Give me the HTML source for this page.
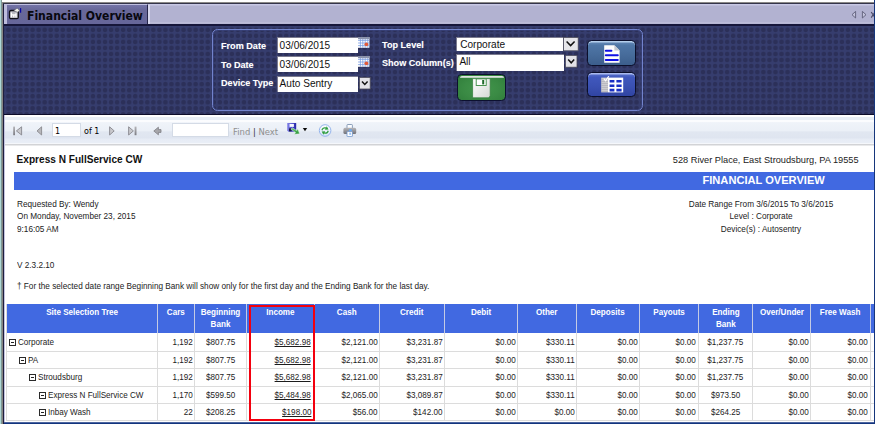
<!DOCTYPE html><html><head><meta charset="utf-8"><title>Financial Overview</title><style>
*{box-sizing:border-box}
html,body{margin:0;padding:0}
body{width:875px;height:424px;overflow:hidden;background:#fff;position:relative;font-family:"Liberation Sans",Arial,sans-serif;font-size:8px;color:#222}
.abs{position:absolute}
#frame-l1{left:0;top:0;width:1px;height:424px;background:#aed8d6}
#frame-l2{left:1px;top:0;width:1px;height:424px;background:#7f9896}
#frame-l3{left:2px;top:2px;width:1px;height:422px;background:#868482}
#frame-l4{left:3px;top:3px;width:1px;height:421px;background:#1e1e3e}
#frame-l5{left:4px;top:115px;width:1px;height:308px;background:#c4c4e0}
#frame-t{left:2px;top:2px;width:873px;height:1px;background:#8a8886}
#frame-t2{left:3px;top:3px;width:872px;height:1px;background:#34344a}
#frame-r{left:874px;top:0;width:1px;height:424px;background:#16367c}
#frame-b{left:4px;top:423px;width:871px;height:1px;background:#12347e}
#frame-b2{left:4px;top:422px;width:871px;height:1px;background:#4d66a0}
#tabbar{left:4px;top:4px;width:870px;height:20.6px;background:linear-gradient(#c8c8e4 0,#c8c8e4 1px,#b2b2d1 2px,#b2b2d1 18px,#c4c4de 19px,#9a9abf 20.6px)}
#tabhl{left:148px;top:5px;width:1.6px;height:19px;background:#d6d6ec}
#tab{left:4px;top:4px;width:144px;height:20.6px;background:linear-gradient(#7474a8 0,#686899 5px,#66669a 100%);border-left:3px solid #bcbcdc;border-top:1px solid #c0c0e0;border-right:1.5px solid #26264a}
#tabtxt{left:27.4px;top:6.6px;font-family:"DejaVu Sans",Verdana,sans-serif;font-weight:bold;font-size:12.6px;line-height:18px;color:#08080f;white-space:nowrap;transform-origin:0 50%;transform:scaleX(0.86)}
#tabline{left:4px;top:24.4px;width:870px;height:1.4px;background:#16163a}
#panel{left:4px;top:25.6px;width:870px;height:88.8px;background-color:#363d6e;overflow:hidden}
#panelline{left:4px;top:113.8px;width:870px;height:1.4px;background:#0c0c2a}
#fbox{left:211.8px;top:29.3px;width:431px;height:81.4px;border:1.8px solid #7283cc;border-radius:5.5px;box-shadow:inset 0 0 0 1px rgba(60,70,130,.6)}
.lbl{color:#fff;font-weight:bold;font-size:9.6px;line-height:12px;white-space:nowrap;transform-origin:0 50%;transform:scaleX(.948);text-shadow:0 0 1px rgba(255,255,255,.3)}
.inp{background:#fff;border-top:1px solid #7b7b8f;border-left:1px solid #7b7b8f;font-size:10.1px;line-height:14px;color:#111;padding-left:2px;white-space:nowrap;overflow:hidden}
.ddbtn{background:linear-gradient(#f4f4f4,#d4d4dc);border:1px solid #555;}
#tb{left:5px;top:115px;width:869px;height:31px;background:linear-gradient(#fff 0,#fff 2px,#e8eef6 2.4px,#e8eef6 4.6px,#fbfcfe 5.2px,#fbfcfe 6.6px,#eff3f9 7.6px,#ebf0f7 15.6px,#e1e7f1 17px,#dfe5f0 22.6px,#e7ecf5 24.6px,#e9eef6 27.6px,#f5f7fb 28.2px,#f5f7fb 29.2px,#d2d3d6 29.5px,#d2d3d6 30.4px,#fff 30.6px,#fff 31px)}
.tbt{font-family:"DejaVu Sans",Verdana,sans-serif;font-size:8px;line-height:12px;white-space:nowrap}
.tbin{background:#fff;border:1px solid #d4dbe6}
#bluebar{left:14px;top:172px;width:861px;height:17.7px;background:#4169e1}
.t8{font-size:8.7px;line-height:12px;white-space:nowrap;color:#222;transform:scaleX(.945);transform-origin:0 50%}
.t8.ctr{transform-origin:50% 50%}
.hd{background:#4169e1;color:#fff;font-weight:bold;font-size:8.8px;line-height:12px;text-align:center;padding-top:2.4px;border-right:1px solid #c4cbe4}
.hd span{display:inline-block;transform:scaleX(.92);transform-origin:50% 50%;white-space:nowrap}
.tx{display:inline-block;transform:scaleX(.933);transform-origin:100% 50%}
.cell.c .tx{transform-origin:50% 50%}
.cell.l .tx{transform-origin:0 50%}
.cell{font-size:8.7px;line-height:12px;white-space:nowrap;color:#1c1c1c;border-right:1px solid #dcdcdc;border-bottom:1px solid #dcdcdc;text-align:right;padding:3.2px 1.6px 0 0}
.cell.c{text-align:center;padding-right:0}
.cell.l{text-align:left;padding-right:0}
.cell u{text-decoration:underline}
.bx{display:inline-block;width:7px;height:7px;border:1px solid #2a2a2a;position:relative;vertical-align:-1px;margin-right:1.8px;background:#fff}
.bx:after{content:"";position:absolute;left:1px;top:2px;width:3px;height:1px;background:#222}
</style></head><body>
<div class="abs" id="tabbar"></div><div class="abs" id="tab"></div><div class="abs" id="tabhl"></div>
<div class="abs" id="tabtxt">Financial Overview</div>
<div class="abs" id="panel"><svg width="870" height="90" style="position:absolute;left:0;top:0"><defs><pattern id="dots" x="1.38" y="0.78" width="6.04" height="6.04" patternUnits="userSpaceOnUse"><circle cx="3.02" cy="3.02" r="2.3" fill="#2c3059"/></pattern></defs><rect width="870" height="90" fill="url(#dots)"/></svg></div><div class="abs" id="tabline"></div><div class="abs" id="panelline"></div>
<svg class="abs" style="left:8px;top:7px" width="15" height="14" viewBox="0 0 15 14"><rect x="1.5" y="3.500" width="8.800" height="8.200" rx="1.500" fill="#b9b9c0" stroke="#101018" stroke-width="1.300"/><path d="M3.400 5.400v4.800M3.400 7.800h4.600M5.800 7.800v2.400M8 6.200v4" stroke="#fff" stroke-width="1.300" fill="none"/><path d="M5.800 3.600 9.200 1.200 11.600 3.400 9.400 5.200z" fill="#f6f6ee" stroke="#55555f" stroke-width=".5"/><rect x="12" y="1.100" width="1.200" height="4.600" fill="#0808a4"/></svg>
<svg class="abs" style="left:848px;top:9px" width="27" height="12" viewBox="0 0 27 12"><path d="M7.6 2.4 4 5.7 7.6 9z" fill="#c4c4dc" stroke="#5c5c78" stroke-width=".9"/><path d="M14.4 2.4 18 5.7 14.4 9z" fill="#c4c4dc" stroke="#5c5c78" stroke-width=".9"/><path d="M23.2 3 27 8.6M27 3 23.2 8.6" stroke="#4a4a66" stroke-width="1.1" fill="none"/></svg>

<div class="abs" id="fbox"></div>
<div class="abs lbl" style="left:220.6px;top:39.7px">From Date</div>
<div class="abs lbl" style="left:220.6px;top:58.7px">To Date</div>
<div class="abs lbl" style="left:220.6px;top:76.8px">Device Type</div>
<div class="abs lbl" style="left:381.5px;top:39px">Top Level</div>
<div class="abs lbl" style="left:381.5px;top:57px">Show Column(s)</div>
<div class="abs inp" style="left:276.6px;top:37.2px;width:81px;height:15.8px;line-height:15px">03/06/2015</div>
<div class="abs inp" style="left:276.6px;top:56.2px;width:81px;height:16.2px;line-height:15px">03/06/2015</div>
<div class="abs inp" style="left:276.6px;top:76px;width:81px;height:15.8px">Auto Sentry</div>
<div class="abs inp" style="left:456.2px;top:37.2px;width:107px;height:14px;line-height:13px;padding-left:3px">Corporate</div>
<div class="abs inp" style="left:456.4px;top:54.4px;width:108px;height:16.4px;line-height:14.6px">All</div>
<svg class="abs" style="left:358.4px;top:37px" width="12" height="11" viewBox="0 0 12 11"><rect x="0" y="0" width="11.4" height="10.8" fill="#fff"/><rect x="0" y="0" width="11.4" height="2.2" fill="#8c93ab"/><path d="M0 3.4h11.4M0 6h11.4M0 8.6h11.4M2.4 1.8v9M4.8 1.8v9M7.2 1.8v9M9.8 1.8v9" stroke="#6f93e0" stroke-width=".7"/><circle cx="8.4" cy="7.3" r="1.9" fill="#e25a3a"/></svg>
<svg class="abs" style="left:358.4px;top:55.6px" width="12" height="11" viewBox="0 0 12 11"><rect x="0" y="0" width="11.4" height="10.8" fill="#fff"/><rect x="0" y="0" width="11.4" height="2.2" fill="#8c93ab"/><path d="M0 3.4h11.4M0 6h11.4M0 8.6h11.4M2.4 1.8v9M4.8 1.8v9M7.2 1.8v9M9.8 1.8v9" stroke="#6f93e0" stroke-width=".7"/><circle cx="8.4" cy="7.3" r="1.9" fill="#e25a3a"/></svg>
<svg class="abs" style="left:358.8px;top:76.8px" width="12" height="13" viewBox="0 0 12 13"><rect x=".4" y=".4" width="10.8" height="11.6" fill="#e3e3e8" stroke="#4a4a5a" stroke-width=".8"/><path d="M3 4.4 5.8 7.4 8.6 4.4" stroke="#111" stroke-width="1.5" fill="none"/></svg>
<svg class="abs" style="left:562.6px;top:37.3px" width="16" height="15" viewBox="0 0 16 15"><rect x=".4" y=".4" width="14.8" height="13.4" fill="#e6e6ea" stroke="#4a4a5a" stroke-width=".8"/><path d="M3.6 4.4 7.6 8.6 11.6 4.4" stroke="#111" stroke-width="1.5" fill="none"/></svg>
<svg class="abs" style="left:564.6px;top:54.8px" width="13" height="13" viewBox="0 0 13 13"><rect x=".4" y=".4" width="11.6" height="11.8" fill="#e3e3e8" stroke="#4a4a5a" stroke-width=".8"/><path d="M3.2 4.6 6.2 7.8 9.2 4.6" stroke="#111" stroke-width="1.5" fill="none"/></svg>
<div class="abs" style="left:457.2px;top:74.4px;width:48.6px;height:26.4px;border-radius:4.5px;background:radial-gradient(ellipse at 50% 55%,#43964c 0,#3a8a44 55%,#2f7c3a 100%);border:1.3px solid #0c1030"></div><div class="abs" style="left:460px;top:75.6px;width:44px;height:2.2px;border-radius:2px 2px 0 0;background:linear-gradient(#eef2ee,#a9c3ad)"></div>
<svg class="abs" style="left:471.8px;top:77.6px" width="20" height="21" viewBox="0 0 20 21"><defs><linearGradient id="flp" x1="0" y1="0" x2="1" y2="1"><stop offset="0" stop-color="#ffffff"/><stop offset="1" stop-color="#d4d8d4"/></linearGradient></defs><path d="M.6 .6h17.6v17.4l-1.6 1.8H.6z" fill="url(#flp)" stroke="#2f7a38" stroke-width=".7"/><rect x="4.2" y=".9" width="10" height="6.6" fill="#fff" stroke="#3a8a42" stroke-width=".9"/><rect x="10.2" y="2" width="2" height="4.4" fill="#1f6a2a"/></svg>
<div class="abs" style="left:587px;top:40px;width:49.2px;height:26.2px;border-radius:4.5px;background:linear-gradient(#6a8fbc 0,#4f76a6 18%,#466b9a 60%,#3c5e8c 100%);border:1.3px solid #0b0f2c;box-shadow:inset 0 1.6px 0 rgba(200,222,248,.8)"></div>
<svg class="abs" style="left:604px;top:45px" width="16" height="18" viewBox="0 0 16 18"><path d="M.2 .2h10.2l5.200 5.200v12.400H.2z" fill="#fcfcfc"/><path d="M10.400 .2v5.200h5.200z" fill="#c4c8d2"/><path d="M1.800 5.800h5.600M1.800 10.200h12M1.800 14.900h12" stroke="#1010e4" stroke-width="2" stroke-linecap="round" fill="none"/></svg>
<div class="abs" style="left:587px;top:71.8px;width:49.2px;height:25px;border-radius:4.5px;background:linear-gradient(#5f78d0 0,#4058bd 18%,#3a50b2 60%,#3044a2 100%);border:1.3px solid #0b0f2c;box-shadow:inset 0 1.6px 0 rgba(196,210,250,.75)"></div>
<svg class="abs" style="left:601px;top:75.600px" width="23" height="17" viewBox="0 0 23 17"><rect x=".2" y="1.600" width="6.800" height="14.800" fill="#d0d0d4"/><path d="M.2 3.400h6.800M.2 5.400h6.800M.2 7.400h6.800M.2 9.400h6.800M.2 11.400h6.800M.2 13.400h6.800M.2 15.400h6.800" stroke="#a4a4ac" stroke-width=".6"/><rect x="7" y="1.600" width="15.200" height="14.800" fill="#fff"/><path d="M8.600 5.200h4.800M15.400 5.200h5.200M8.600 9.800h4.800M15.400 9.800h5.200M8.600 14.100h4.800M15.400 14.100h5.200" stroke="#1a2fc4" stroke-width="2.600"/><path d="M2.800 2.600 4.600 4.800 7.800 .2" stroke="#fff" stroke-width="1.200" fill="none"/></svg>
<div class="abs" style="left:429px;top:115.4px;width:27px;height:4.5px;background:linear-gradient(#3f74e6,#6c9cf0)"></div>
<svg class="abs" style="left:439.6px;top:115.6px" width="6" height="5" viewBox="0 0 6 5"><path d="M3 .4 5.8 4.2H.2z" fill="#fff"/></svg>

<div class="abs" id="tb"></div>
<div class="abs tbin" style="left:51.5px;top:123px;width:29px;height:14px"></div>
<div class="abs tbt" style="left:55px;top:125.6px;color:#000">1</div>
<div class="abs tbt" style="left:84px;top:125.6px;color:#000">of 1</div>
<div class="abs tbin" style="left:172px;top:123px;width:57px;height:14px"></div>
<div class="abs tbt" style="left:233px;top:125.6px;color:#8f8f8f;font-size:8.45px">Find <span style="color:#333">|</span> Next</div>
<svg class="abs" style="left:12px;top:124.800px" width="152" height="13" viewBox="0 0 152 13"><defs><linearGradient id="gry" x1="0" y1="0" x2="0" y2="1"><stop offset="0" stop-color="#b4b4b8"/><stop offset="1" stop-color="#7c7c82"/></linearGradient></defs>
<rect x="1.2" y="1.6" width="1.8" height="8.6" fill="url(#gry)"/><path d="M9.6 1.8 4.4 5.9 9.6 10z" fill="#c8c8cc" stroke="#88888e" stroke-width=".9"/>
<path d="M29.6 1.8 25 5.9 29.6 10z" fill="#b8b8bc" stroke="#8a8a90" stroke-width=".9"/>
<path d="M97.6 1.8 102.2 5.9 97.6 10z" fill="#c8c8cc" stroke="#88888e" stroke-width=".9"/>
<path d="M116.6 1.8 121.4 5.9 116.6 10z" fill="#c8c8cc" stroke="#88888e" stroke-width=".9"/><rect x="122.6" y="1.6" width="1.9" height="8.6" fill="url(#gry)"/>
<path d="M141.8 6 146.4 2.2v2.4h2.6v2.8h-2.6v2.4z" fill="#a6a6aa" stroke="#7e7e84" stroke-width=".8"/></svg>
<svg class="abs" style="left:286px;top:122px" width="24" height="14" viewBox="0 0 24 14"><defs><linearGradient id="flb" x1="0" y1="0" x2="1" y2="0"><stop offset="0" stop-color="#8686e6"/><stop offset=".55" stop-color="#4a4ad0"/><stop offset="1" stop-color="#2626a4"/></linearGradient><linearGradient id="arg" x1="0" y1="0" x2="0" y2="1"><stop offset="0" stop-color="#6ccc78"/><stop offset="1" stop-color="#23902f"/></linearGradient></defs><path d="M1.200 1h9v8.700H2.400L1.200 8.500z" fill="url(#flb)"/><rect x="3.500" y="1.900" width="4.400" height="3" fill="#f4f6ff"/><rect x="3" y="6.400" width="2.600" height="3" fill="#1a1a44"/><path d="M5 7.200 6.200 5.800 10.600 8.400 11.800 6.800 13.600 11.800 8.400 12.200 9.600 10.500z" fill="url(#arg)" stroke="#e8f4ec" stroke-width=".5"/><path d="M16.800 6h4.400L19 9.200z" fill="#0a0a0a"/></svg>
<svg class="abs" style="left:318px;top:123px" width="15" height="15" viewBox="0 0 15 15"><defs><linearGradient id="rfg" x1="0" y1="0" x2="0" y2="1"><stop offset="0" stop-color="#ffffff"/><stop offset="1" stop-color="#d4e2f8"/></linearGradient></defs><circle cx="7.100" cy="7.500" r="5.800" fill="url(#rfg)" stroke="#94b4ec" stroke-width="1"/><path d="M3.400 7C3.800 4.600 6.200 3.600 8.200 4.400l.6-1.200 1.700 3.200-3.500.4.600-1.200C6.400 5.200 4.800 5.800 4.600 7.400z" fill="#2f9e3e"/><path d="M10.800 8C10.400 10.400 8 11.400 6 10.600l-.6 1.200-1.700-3.200 3.500-.4-.6 1.200c1.200.4 2.800-.2 3-1.800z" fill="#2f9e3e"/></svg>
<svg class="abs" style="left:343px;top:124px" width="14" height="13" viewBox="0 0 14 13"><defs><linearGradient id="prg" x1="0" y1="0" x2="0" y2="1"><stop offset="0" stop-color="#b6b6ba"/><stop offset="1" stop-color="#707076"/></linearGradient></defs><rect x="4" y=".5" width="5.400" height="4.400" rx=".8" fill="#fafcff" stroke="#7088a8" stroke-width=".8"/><rect x=".4" y="3.800" width="12.800" height="6.300" rx="1.600" fill="url(#prg)"/><rect x="4" y="7.400" width="5.400" height="5.200" rx=".6" fill="#fcfdff" stroke="#6f94cc" stroke-width=".8"/><rect x="6" y="5.300" width="2.800" height="1.700" fill="#6cacf0"/><rect x="6.300" y="8.600" width="1.600" height="2.200" fill="#8cbcf4"/></svg>

<div class="abs" style="left:16.6px;top:153px;font-weight:bold;font-size:10.1px;line-height:14px;white-space:nowrap;color:#111">Express N FullService CW</div>
<div class="abs" style="right:16.7px;top:153.2px;font-size:9.8px;line-height:14px;white-space:nowrap;color:#222;transform:scaleX(.94);transform-origin:100% 50%">528 River Place, East Stroudsburg, PA 19555</div>
<div class="abs" id="bluebar"></div>
<div class="abs" style="left:702.5px;top:173px;font-weight:bold;font-size:11.1px;line-height:15px;white-space:nowrap;color:#fff">FINANCIAL OVERVIEW</div>
<div class="abs t8" style="left:16.6px;top:197.8px">Requested By: Wendy</div>
<div class="abs t8" style="left:16.6px;top:210.2px">On Monday, November 23, 2015</div>
<div class="abs t8" style="left:16.6px;top:222.5px">9:16:05 AM</div>
<div class="abs t8" style="left:16.6px;top:258.7px">V 2.3.2.10</div>
<div class="abs t8" style="left:16.6px;top:279.8px">† For the selected date range Beginning Bank will show only for the first day and the Ending Bank for the last day.</div>
<div class="abs t8 ctr" style="left:660.8px;width:200px;text-align:center;top:197.8px">Date Range From 3/6/2015 To 3/6/2015</div>
<div class="abs t8 ctr" style="left:660.8px;width:200px;text-align:center;top:210.2px">Level : Corporate</div>
<div class="abs t8 ctr" style="left:660.8px;width:200px;text-align:center;top:222.5px">Device(s) : Autosentry</div>
<div class="abs" style="left:6px;top:304.4px;width:1px;height:116.8px;background:#dcdcdc"></div>
<div class="abs hd" style="left:7px;top:304px;width:151px;height:29px"><span>Site Selection Tree</span></div>
<div class="abs hd" style="left:158px;top:304px;width:37px;height:29px"><span>Cars</span></div>
<div class="abs hd" style="left:195px;top:304px;width:52px;height:29px"><span>Beginning<br>Bank</span></div>
<div class="abs hd" style="left:247px;top:304px;width:68px;height:29px"><span>Income</span></div>
<div class="abs hd" style="left:315px;top:304px;width:65px;height:29px"><span>Cash</span></div>
<div class="abs hd" style="left:380px;top:304px;width:65px;height:29px"><span>Credit</span></div>
<div class="abs hd" style="left:445px;top:304px;width:73px;height:29px"><span>Debit</span></div>
<div class="abs hd" style="left:518px;top:304px;width:59px;height:29px"><span>Other</span></div>
<div class="abs hd" style="left:577px;top:304px;width:63px;height:29px"><span>Deposits</span></div>
<div class="abs hd" style="left:640px;top:304px;width:59px;height:29px"><span>Payouts</span></div>
<div class="abs hd" style="left:699px;top:304px;width:54px;height:29px"><span>Ending<br>Bank</span></div>
<div class="abs hd" style="left:753px;top:304px;width:58px;height:29px"><span>Over/Under</span></div>
<div class="abs hd" style="left:811px;top:304px;width:60px;height:29px"><span>Free Wash</span></div>
<div class="abs hd" style="left:871px;top:304px;width:5px;height:29px"></div>
<div class="abs cell l" style="left:7px;top:333px;width:151px;height:19px;padding-top:3.4px;padding-left:2.3px;"><span class="bx"></span><span class="tx">Corporate</span></div>
<div class="abs cell" style="left:158px;top:333px;width:37px;height:19px;padding-top:3.4px;"><span class="tx">1,192</span></div>
<div class="abs cell c" style="left:195px;top:333px;width:52px;height:19px;padding-top:3.4px;"><span class="tx">$807.75</span></div>
<div class="abs cell" style="left:247px;top:333px;width:68px;height:19px;padding-top:3.4px;padding-right:3px;"><span class="tx"><u>$5,682.98</u></span></div>
<div class="abs cell" style="left:315px;top:333px;width:65px;height:19px;padding-top:3.4px;"><span class="tx">$2,121.00</span></div>
<div class="abs cell" style="left:380px;top:333px;width:65px;height:19px;padding-top:3.4px;"><span class="tx">$3,231.87</span></div>
<div class="abs cell" style="left:445px;top:333px;width:73px;height:19px;padding-top:3.4px;"><span class="tx">$0.00</span></div>
<div class="abs cell" style="left:518px;top:333px;width:59px;height:19px;padding-top:3.4px;"><span class="tx">$330.11</span></div>
<div class="abs cell" style="left:577px;top:333px;width:63px;height:19px;padding-top:3.4px;"><span class="tx">$0.00</span></div>
<div class="abs cell" style="left:640px;top:333px;width:59px;height:19px;padding-top:3.4px;padding-right:2.4px;"><span class="tx">$0.00</span></div>
<div class="abs cell c" style="left:699px;top:333px;width:54px;height:19px;padding-top:3.4px;"><span class="tx">$1,237.75</span></div>
<div class="abs cell" style="left:753px;top:333px;width:58px;height:19px;padding-top:3.4px;"><span class="tx">$0.00</span></div>
<div class="abs cell" style="left:811px;top:333px;width:60px;height:19px;padding-top:3.4px;padding-right:2.2px;"><span class="tx">$0.00</span></div>
<div class="abs cell" style="left:871px;top:333px;width:5px;height:19px;padding:0"></div>
<div class="abs cell l" style="left:7px;top:352px;width:151px;height:17px;padding-top:2.4px;padding-left:12.3px;"><span class="bx"></span><span class="tx">PA</span></div>
<div class="abs cell" style="left:158px;top:352px;width:37px;height:17px;padding-top:2.4px;"><span class="tx">1,192</span></div>
<div class="abs cell c" style="left:195px;top:352px;width:52px;height:17px;padding-top:2.4px;"><span class="tx">$807.75</span></div>
<div class="abs cell" style="left:247px;top:352px;width:68px;height:17px;padding-top:2.4px;padding-right:3px;"><span class="tx"><u>$5,682.98</u></span></div>
<div class="abs cell" style="left:315px;top:352px;width:65px;height:17px;padding-top:2.4px;"><span class="tx">$2,121.00</span></div>
<div class="abs cell" style="left:380px;top:352px;width:65px;height:17px;padding-top:2.4px;"><span class="tx">$3,231.87</span></div>
<div class="abs cell" style="left:445px;top:352px;width:73px;height:17px;padding-top:2.4px;"><span class="tx">$0.00</span></div>
<div class="abs cell" style="left:518px;top:352px;width:59px;height:17px;padding-top:2.4px;"><span class="tx">$330.11</span></div>
<div class="abs cell" style="left:577px;top:352px;width:63px;height:17px;padding-top:2.4px;"><span class="tx">$0.00</span></div>
<div class="abs cell" style="left:640px;top:352px;width:59px;height:17px;padding-top:2.4px;padding-right:2.4px;"><span class="tx">$0.00</span></div>
<div class="abs cell c" style="left:699px;top:352px;width:54px;height:17px;padding-top:2.4px;"><span class="tx">$1,237.75</span></div>
<div class="abs cell" style="left:753px;top:352px;width:58px;height:17px;padding-top:2.4px;"><span class="tx">$0.00</span></div>
<div class="abs cell" style="left:811px;top:352px;width:60px;height:17px;padding-top:2.4px;padding-right:2.2px;"><span class="tx">$0.00</span></div>
<div class="abs cell" style="left:871px;top:352px;width:5px;height:17px;padding:0"></div>
<div class="abs cell l" style="left:7px;top:369px;width:151px;height:18px;padding-top:2.4px;padding-left:22.3px;"><span class="bx"></span><span class="tx">Stroudsburg</span></div>
<div class="abs cell" style="left:158px;top:369px;width:37px;height:18px;padding-top:2.4px;"><span class="tx">1,192</span></div>
<div class="abs cell c" style="left:195px;top:369px;width:52px;height:18px;padding-top:2.4px;"><span class="tx">$807.75</span></div>
<div class="abs cell" style="left:247px;top:369px;width:68px;height:18px;padding-top:2.4px;padding-right:3px;"><span class="tx"><u>$5,682.98</u></span></div>
<div class="abs cell" style="left:315px;top:369px;width:65px;height:18px;padding-top:2.4px;"><span class="tx">$2,121.00</span></div>
<div class="abs cell" style="left:380px;top:369px;width:65px;height:18px;padding-top:2.4px;"><span class="tx">$3,231.87</span></div>
<div class="abs cell" style="left:445px;top:369px;width:73px;height:18px;padding-top:2.4px;"><span class="tx">$0.00</span></div>
<div class="abs cell" style="left:518px;top:369px;width:59px;height:18px;padding-top:2.4px;"><span class="tx">$330.11</span></div>
<div class="abs cell" style="left:577px;top:369px;width:63px;height:18px;padding-top:2.4px;"><span class="tx">$0.00</span></div>
<div class="abs cell" style="left:640px;top:369px;width:59px;height:18px;padding-top:2.4px;padding-right:2.4px;"><span class="tx">$0.00</span></div>
<div class="abs cell c" style="left:699px;top:369px;width:54px;height:18px;padding-top:2.4px;"><span class="tx">$1,237.75</span></div>
<div class="abs cell" style="left:753px;top:369px;width:58px;height:18px;padding-top:2.4px;"><span class="tx">$0.00</span></div>
<div class="abs cell" style="left:811px;top:369px;width:60px;height:18px;padding-top:2.4px;padding-right:2.2px;"><span class="tx">$0.00</span></div>
<div class="abs cell" style="left:871px;top:369px;width:5px;height:18px;padding:0"></div>
<div class="abs cell l" style="left:7px;top:387px;width:151px;height:17px;padding-top:2.4px;padding-left:32.3px;"><span class="bx"></span><span class="tx">Express N FullService CW</span></div>
<div class="abs cell" style="left:158px;top:387px;width:37px;height:17px;padding-top:2.4px;"><span class="tx">1,170</span></div>
<div class="abs cell c" style="left:195px;top:387px;width:52px;height:17px;padding-top:2.4px;"><span class="tx">$599.50</span></div>
<div class="abs cell" style="left:247px;top:387px;width:68px;height:17px;padding-top:2.4px;padding-right:3px;"><span class="tx"><u>$5,484.98</u></span></div>
<div class="abs cell" style="left:315px;top:387px;width:65px;height:17px;padding-top:2.4px;"><span class="tx">$2,065.00</span></div>
<div class="abs cell" style="left:380px;top:387px;width:65px;height:17px;padding-top:2.4px;"><span class="tx">$3,089.87</span></div>
<div class="abs cell" style="left:445px;top:387px;width:73px;height:17px;padding-top:2.4px;"><span class="tx">$0.00</span></div>
<div class="abs cell" style="left:518px;top:387px;width:59px;height:17px;padding-top:2.4px;"><span class="tx">$330.11</span></div>
<div class="abs cell" style="left:577px;top:387px;width:63px;height:17px;padding-top:2.4px;"><span class="tx">$0.00</span></div>
<div class="abs cell" style="left:640px;top:387px;width:59px;height:17px;padding-top:2.4px;padding-right:2.4px;"><span class="tx">$0.00</span></div>
<div class="abs cell c" style="left:699px;top:387px;width:54px;height:17px;padding-top:2.4px;"><span class="tx">$973.50</span></div>
<div class="abs cell" style="left:753px;top:387px;width:58px;height:17px;padding-top:2.4px;"><span class="tx">$0.00</span></div>
<div class="abs cell" style="left:811px;top:387px;width:60px;height:17px;padding-top:2.4px;padding-right:2.2px;"><span class="tx">$0.00</span></div>
<div class="abs cell" style="left:871px;top:387px;width:5px;height:17px;padding:0"></div>
<div class="abs cell l" style="left:7px;top:404px;width:151px;height:17px;padding-top:2.4px;padding-left:32.3px;"><span class="bx"></span><span class="tx">Inbay Wash</span></div>
<div class="abs cell" style="left:158px;top:404px;width:37px;height:17px;padding-top:2.4px;"><span class="tx">22</span></div>
<div class="abs cell c" style="left:195px;top:404px;width:52px;height:17px;padding-top:2.4px;"><span class="tx">$208.25</span></div>
<div class="abs cell" style="left:247px;top:404px;width:68px;height:17px;padding-top:2.4px;padding-right:3px;"><span class="tx"><u>$198.00</u></span></div>
<div class="abs cell" style="left:315px;top:404px;width:65px;height:17px;padding-top:2.4px;"><span class="tx">$56.00</span></div>
<div class="abs cell" style="left:380px;top:404px;width:65px;height:17px;padding-top:2.4px;"><span class="tx">$142.00</span></div>
<div class="abs cell" style="left:445px;top:404px;width:73px;height:17px;padding-top:2.4px;"><span class="tx">$0.00</span></div>
<div class="abs cell" style="left:518px;top:404px;width:59px;height:17px;padding-top:2.4px;"><span class="tx">$0.00</span></div>
<div class="abs cell" style="left:577px;top:404px;width:63px;height:17px;padding-top:2.4px;"><span class="tx">$0.00</span></div>
<div class="abs cell" style="left:640px;top:404px;width:59px;height:17px;padding-top:2.4px;padding-right:2.4px;"><span class="tx">$0.00</span></div>
<div class="abs cell c" style="left:699px;top:404px;width:54px;height:17px;padding-top:2.4px;"><span class="tx">$264.25</span></div>
<div class="abs cell" style="left:753px;top:404px;width:58px;height:17px;padding-top:2.4px;"><span class="tx">$0.00</span></div>
<div class="abs cell" style="left:811px;top:404px;width:60px;height:17px;padding-top:2.4px;padding-right:2.2px;"><span class="tx">$0.00</span></div>
<div class="abs cell" style="left:871px;top:404px;width:5px;height:17px;padding:0"></div>
<div class="abs" style="left:249px;top:305px;width:66px;height:115.8px;border:2px solid #f3000e"></div>
<div class="abs" style="left:0;top:0;width:875px;height:2px;background:#fff"></div>
<div class="abs" id="frame-l1"></div>
<div class="abs" id="frame-l2"></div>
<div class="abs" id="frame-l3"></div>
<div class="abs" id="frame-l4"></div>
<div class="abs" id="frame-l5"></div>
<div class="abs" id="frame-t"></div>
<div class="abs" id="frame-t2"></div>
<div class="abs" id="frame-b2"></div>
<div class="abs" id="frame-b"></div>
<div class="abs" id="frame-r"></div>
</body></html>
